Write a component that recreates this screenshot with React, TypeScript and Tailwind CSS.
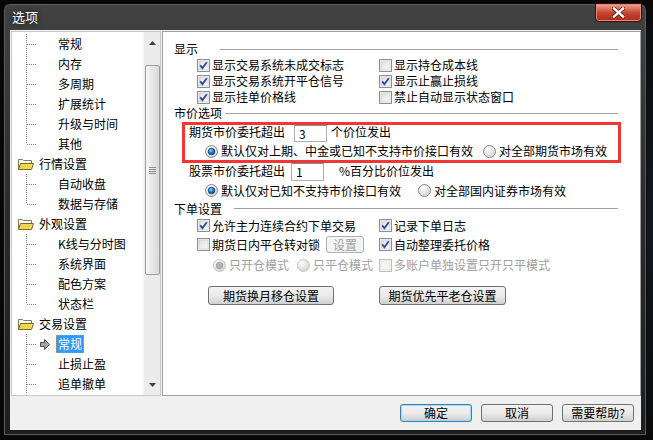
import React from 'react';

const FONT = "font-['Noto_Sans_CJK_SC','Noto_Sans',sans-serif]";

function Check({ checked, disabled }: { checked?: boolean; disabled?: boolean }) {
    return (
        <svg width="13" height="13" viewBox="0 0 13 13" className="shrink-0">
            <defs>
                <linearGradient id="cbg" x1="0" y1="0" x2="1" y2="1">
                    <stop offset="0" stopColor="#dcdcdc" />
                    <stop offset="1" stopColor="#fbfbfb" />
                </linearGradient>
            </defs>
            <rect x="0.5" y="0.5" width="12" height="12" fill="#f4f4f4" stroke={disabled ? '#c0c0c0' : '#8e8f8f'} />
            <rect x="2" y="2" width="9" height="9" fill={disabled ? '#f4f4f4' : 'url(#cbg)'} stroke={disabled ? '#dedede' : '#c8c8c8'} strokeWidth="0.6" />
            {checked && (
                <path d="M3.2 6.4 L5.4 9.2 L9.8 3.2" fill="none" stroke={disabled ? '#a0a0a0' : '#2b4a9a'} strokeWidth="1.8" />
            )}
        </svg>
    );
}

function Radio({ checked, disabled }: { checked?: boolean; disabled?: boolean }) {
    return (
        <svg width="13" height="13" viewBox="0 0 13 13" className="shrink-0">
            <defs>
                <radialGradient id="rbg" cx="0.35" cy="0.3" r="0.8">
                    <stop offset="0" stopColor="#ffffff" />
                    <stop offset="1" stopColor="#cfcfcf" />
                </radialGradient>
                <radialGradient id="rdot" cx="0.4" cy="0.35" r="0.7">
                    <stop offset="0" stopColor="#8fd4ff" />
                    <stop offset="0.5" stopColor="#1a86d8" />
                    <stop offset="1" stopColor="#0b3f7a" />
                </radialGradient>
            </defs>
            <circle cx="6.5" cy="6.5" r="6" fill="url(#rbg)" stroke={disabled ? '#c4c4c4' : '#8a8a8a'} />
            {checked && (
                <circle cx="6.5" cy="6.5" r="3.3" fill={disabled ? '#b4b4b4' : 'url(#rdot)'} stroke={disabled ? '#9a9a9a' : '#0b2f5a'} strokeWidth="0.7" />
            )}
        </svg>
    );
}

function CheckItem({ label, checked, disabled }: { label: string; checked?: boolean; disabled?: boolean }) {
    return (
        <div className="flex shrink-0 items-center gap-[2px]">
            <Check checked={checked} disabled={disabled} />
            <span className={`leading-[16px] ${disabled ? 'text-[#a0a0a0]' : ''}`}>{label}</span>
        </div>
    );
}

function RadioItem({ label, checked, disabled }: { label: string; checked?: boolean; disabled?: boolean }) {
    return (
        <div className="flex shrink-0 items-center gap-[3px]">
            <Radio checked={checked} disabled={disabled} />
            <span className={`leading-[16px] ${disabled ? 'text-[#a0a0a0]' : ''}`}>{label}</span>
        </div>
    );
}

function GroupHeader({ label, gap }: { label: string; gap: number }) {
    const gaps: Record<number, string> = { 22: 'ml-[22px]', 3: 'ml-[3px]', 12: 'ml-[12px]' };
    return (
        <div className="flex items-center pl-[11px] pr-[22px]">
            <span className="leading-[16px]">{label}</span>
            <div className={`flex-1 h-px bg-[#a0a0a0] ${gaps[gap]}`} />
        </div>
    );
}

function WinButton({ children, className = '', disabled }: { children: React.ReactNode; className?: string; disabled?: boolean }) {
    return (
        <div
            className={`flex shrink-0 items-center justify-center rounded-[3px] border leading-[14px] ${disabled
                ? 'border-[#adb2b5] bg-[#f4f4f4] text-[#a0a0a0]'
                : 'border-[#707070] bg-gradient-to-b from-[#f2f2f2] via-[#ebebeb] to-[#cfcfcf]'
                } ${className}`}
        >
            {children}
        </div>
    );
}

type TreeNode = { label: string; kind: 'folder' | 'child'; last?: boolean; selected?: boolean };

const TREE: TreeNode[] = [
    { label: '常规', kind: 'child' },
    { label: '内存', kind: 'child' },
    { label: '多周期', kind: 'child' },
    { label: '扩展统计', kind: 'child' },
    { label: '升级与时间', kind: 'child' },
    { label: '其他', kind: 'child', last: true },
    { label: '行情设置', kind: 'folder' },
    { label: '自动收盘', kind: 'child' },
    { label: '数据与存储', kind: 'child', last: true },
    { label: '外观设置', kind: 'folder' },
    { label: 'K线与分时图', kind: 'child' },
    { label: '系统界面', kind: 'child' },
    { label: '配色方案', kind: 'child' },
    { label: '状态栏', kind: 'child', last: true },
    { label: '交易设置', kind: 'folder' },
    { label: '常规', kind: 'child', selected: true },
    { label: '止损止盈', kind: 'child' },
    { label: '追单撤单', kind: 'child' },
];

function FolderIcon() {
    return (
        <svg width="26" height="20" viewBox="0 0 26 20" className="shrink-0">
            <path d="M6.5 15.5 V5.5 H10.5 L11.5 6.5 H19.5 V9" fill="#f4f1dc" stroke="#7d7d6a" />
            <path d="M7.5 7.5 H18.5 V9.5" fill="none" stroke="#ffffff" />
            <path d="M6.5 15.5 L8.5 9.5 H21.5 L19.5 15.5 Z" fill="#f2dd5c" stroke="#7a6a22" />
            <path d="M9.5 11 H19.5 M9 12.5 H19 M8.5 14 H18.5" stroke="#e3c63a" strokeDasharray="1 1" />
        </svg>
    );
}

function Connector({ last, selected }: { last?: boolean; selected?: boolean }) {
    return (
        <svg width="44" height="20" viewBox="0 0 44 20" className="shrink-0">
            <line x1="14.5" y1="0" x2="14.5" y2={last ? 10 : 20} stroke="#808080" strokeDasharray="1 1" />
            <line x1="15" y1="10.5" x2="25" y2="10.5" stroke="#808080" strokeDasharray="1 1" />
            {selected && (
                <path d="M28.5 8.5 H32.5 V5.5 L37.5 10.5 L32.5 15.5 V12.5 H28.5 Z" fill="#a8a8a8" stroke="#4a4a4a" />
            )}
        </svg>
    );
}

function Tree() {
    return (
        <div className="w-[150px] h-[365px] shrink-0 border border-[#c9c9c9] bg-white flex">
            <div className="flex-1 pt-[2px] flex flex-col">
                {TREE.map((n, i) => (
                    <div key={i} className="h-[20px] flex items-center">
                        {n.kind === 'folder' ? <FolderIcon /> : <Connector last={n.last} selected={n.selected} />}
                        <span
                            className={`h-[18px] border leading-[16px] ${n.selected
                                ? 'px-px bg-[#3399ff] text-white border-dotted border-[#e08a2a]'
                                : 'border-transparent'
                                } ${n.kind === 'folder' ? 'px-0' : 'px-px'}`}
                        >
                            {n.label}
                        </span>
                    </div>
                ))}
            </div>
            <div className="w-[17px] bg-[#ececec] border-l border-[#f6f6f6] flex flex-col items-center">
                <div className="h-[22px] w-full flex justify-center pt-[9px]">
                    <svg width="7" height="4" viewBox="0 0 7 4"><path d="M3.5 0 L7 4 H0 Z" fill="#3f3f3f" /></svg>
                </div>
                <div className="mt-[11px] w-[15px] h-[210px] rounded-[2px] border border-[#9a9ea3] bg-gradient-to-r from-[#f6f6f6] to-[#d9d9d9] flex flex-col items-center justify-center gap-[1px]">
                    <div className="w-[7px] h-px bg-[#8a8a8a]" />
                    <div className="w-[7px] h-px bg-[#8a8a8a]" />
                    <div className="w-[7px] h-px bg-[#8a8a8a]" />
                    <div className="w-[7px] h-px bg-[#8a8a8a]" />
                </div>
                <div className="flex-1" />
                <div className="h-[19px] w-full flex justify-center pt-[7px]">
                    <svg width="7" height="4" viewBox="0 0 7 4"><path d="M0 0 H7 L3.5 4 Z" fill="#3f3f3f" /></svg>
                </div>
            </div>
        </div>
    );
}

function TextBox({ value, className = '' }: { value: string; className?: string }) {
    return (
        <div className={`w-[33px] shrink-0 bg-white border border-[#abadb3] border-t-[#8a8d94] pl-[4px] leading-[14px] flex items-center ${className}`}>
            {value}
        </div>
    );
}

function OptionsPanel() {
    return (
        <div className="w-[479px] h-[365px] shrink-0 border border-[#a0a0a0] bg-white flex flex-col">
            <div className="mt-[9px] h-[16px]">
                <GroupHeader label="显示" gap={22} />
            </div>
            {[
                ['显示交易系统未成交标志', true, '显示持仓成本线', false],
                ['显示交易系统开平仓信号', true, '显示止赢止损线', true],
                ['显示挂单价格线', true, '禁止自动显示状态窗口', false],
            ].map(([a, ac, b, bc], i) => (
                <div key={i} className="h-[16px] flex items-center pl-[34px]">
                    <div className="w-[182px] shrink-0"><CheckItem label={a as string} checked={ac as boolean} /></div>
                    <CheckItem label={b as string} checked={bc as boolean} />
                </div>
            ))}
            <div className="h-[16px]">
                <GroupHeader label="市价选项" gap={3} />
            </div>

            <div className="mt-px ml-[19px] w-[439px] h-[41px] border-[3px] border-[#f23535] flex flex-col">
                <div className="h-[17px] flex items-start pl-[4px]">
                    <span className="leading-[14px]">期货市价委托超出</span>
                    <TextBox value="3" className="ml-[9px] h-[17px]" />
                    <span className="ml-[4px] leading-[14px]">个价位发出</span>
                </div>
                <div className="h-[18px] flex items-center pl-[20px]">
                    <div className="w-[278px] shrink-0"><RadioItem label="默认仅对上期、中金或已知不支持市价接口有效" checked /></div>
                    <RadioItem label="对全部期货市场有效" />
                </div>
            </div>

            <div className="h-[18px] flex items-start pl-[26px]">
                <span className="mt-px leading-[14px]">股票市价委托超出</span>
                <TextBox value="1" className="ml-[6px] h-[18px]" />
                <span className="ml-[15px] mt-px leading-[14px]">%百分比价位发出</span>
            </div>
            <div className="h-[19px] flex items-center pl-[42px]">
                <div className="w-[213px] shrink-0"><RadioItem label="默认仅对已知不支持市价接口有效" checked /></div>
                <RadioItem label="对全部国内证券市场有效" />
            </div>

            <div className="h-[17px] flex items-center">
                <div className="flex-1"><GroupHeader label="下单设置" gap={12} /></div>
            </div>
            <div className="h-[17px] flex items-center pl-[34px]">
                <div className="w-[182px] shrink-0"><CheckItem label="允许主力连续合约下单交易" checked /></div>
                <CheckItem label="记录下单日志" checked />
            </div>
            <div className="mt-px h-[19px] flex items-center pl-[34px]">
                <div className="w-[182px] shrink-0 flex items-center">
                    <CheckItem label="期货日内平仓转对锁" />
                    <WinButton disabled className="ml-[6px] w-[38px] h-[17px]">设置</WinButton>
                </div>
                <CheckItem label="自动整理委托价格" checked />
            </div>
            <div className="mt-[3px] h-[16px] flex items-center pl-[34px]">
                <div className="w-[182px] shrink-0 flex items-center pl-[16px]">
                    <RadioItem label="只开仓模式" checked disabled />
                    <div className="ml-[8px] shrink-0"><RadioItem label="只平仓模式" disabled /></div>
                </div>
                <CheckItem label="多账户单独设置只开只平模式" disabled />
            </div>

            <div className="mt-[13px] flex items-center pl-[45px]">
                <WinButton className="w-[126px] h-[19px]">期货换月移仓设置</WinButton>
                <WinButton className="ml-[45px] w-[127px] h-[19px]">期货优先平老仓设置</WinButton>
            </div>
        </div>
    );
}

export default function App() {
    return (
        <div className={`w-[653px] h-[440px] bg-[#070707] overflow-hidden flex whitespace-nowrap text-[12px] text-black ${FONT}`}>
            <div className="mt-[3px] ml-[3px] w-[644px] h-[433px] shrink-0 rounded-t-[7px] border border-[#0c0c0c] bg-gradient-to-b from-[#424242] via-[#2a2a2a] to-[#1e1e1e] flex flex-col shadow-[inset_0_0_0_1px_#5a5a5a]">
                {/* title bar */}
                <div className="h-[26px] flex items-start">
                    <span className="ml-[8px] mt-[6px] text-[13px] leading-[14px] text-white [text-shadow:0_0_6px_#000]">选项</span>
                    <div className="ml-auto mr-[4px] -mt-px w-[47px] h-[19px] rounded-b-[4px] border border-[#3a0d08] bg-gradient-to-b from-[#e9a797] via-[#c8472f] to-[#a92a18] shadow-[inset_0_0_0_1px_#e98a78] flex items-center justify-center">
                        <svg width="13" height="11" viewBox="0 0 13 11">
                            <path d="M2 1.5 L11 9.5 M11 1.5 L2 9.5" stroke="#5a1a10" strokeWidth="4" strokeLinecap="square" />
                            <path d="M2 1.5 L11 9.5 M11 1.5 L2 9.5" stroke="#ffffff" strokeWidth="2.4" strokeLinecap="square" />
                        </svg>
                    </div>
                </div>

                {/* client area */}
                <div className="ml-[6px] w-[631px] h-[400px] bg-[#f0f0f0] flex flex-col">
                    <div className="pt-px pl-px flex gap-px">
                        <Tree />
                        <OptionsPanel />
                    </div>
                    <div className="mt-[8px] flex justify-end gap-[9px] pr-[7px]">
                        <WinButton className="w-[72px] h-[18px] !border-[#3c7fb1] shadow-[inset_0_0_0_1px_#9fd8f8]">确定</WinButton>
                        <WinButton className="w-[72px] h-[18px]">取消</WinButton>
                        <WinButton className="w-[72px] h-[18px]">需要帮助?</WinButton>
                    </div>
                </div>
            </div>
            <div className="flex-1 bg-gradient-to-b from-[#0a0a0a] via-[#101822] to-[#0a0a0a]" />
        </div>
    );
}
